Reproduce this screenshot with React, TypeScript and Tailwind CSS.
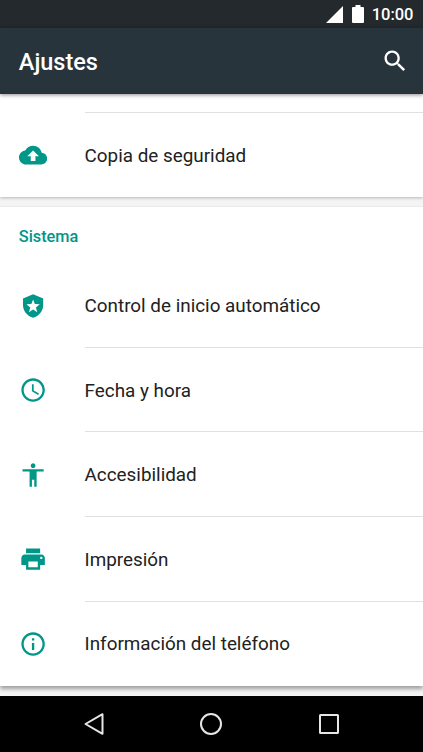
import type { ReactNode } from "react";

type SettingItem = {
  label: string;
  icon: ReactNode;
};

function Icon({ children }: { children: ReactNode }) {
  return (
    <svg viewBox="0 0 24 24" className="h-[28.2px] w-[28.2px] shrink-0 fill-current text-[#009688]">
      {children}
    </svg>
  );
}

const backup: SettingItem = {
  label: "Copia de seguridad",
  icon: (
    <path d="M19.35 10.04C18.67 6.59 15.64 4 12 4 9.11 4 6.6 5.64 5.35 8.04 2.34 8.36 0 10.91 0 14c0 3.31 2.69 6 6 6h13c2.76 0 5-2.24 5-5 0-2.64-2.05-4.78-4.65-4.96zM14 13v4h-4v-4H7l5-5 5 5h-3z" />
  ),
};

const systemItems: SettingItem[] = [
  {
    label: "Control de inicio automático",
    icon: (
      <>
        <path d="M12 2l8.6 3.6v5.5c0 5-3.6 9.5-8.6 10.9-5-1.4-8.6-5.9-8.6-10.9V5.6z" />
        <path
          className="fill-white"
          d="M12 6.4l1.5 3.9 4.2.2-3.3 2.6 1.15 4.05L12 14.85l-3.55 2.3 1.15-4.05-3.3-2.6 4.2-.2z"
        />
      </>
    ),
  },
  {
    label: "Fecha y hora",
    icon: (
      <path d="M11.99 2C6.47 2 2 6.48 2 12s4.47 10 9.99 10C17.52 22 22 17.52 22 12S17.52 2 11.99 2zM12 20c-4.42 0-8-3.58-8-8s3.58-8 8-8 8 3.58 8 8-3.58 8-8 8zm.5-13H11v6l5.25 3.15.75-1.23-4.5-2.67z" />
    ),
  },
  {
    label: "Accesibilidad",
    icon: (
      <path d="M12 2c1.1 0 2 .9 2 2s-.9 2-2 2-2-.9-2-2 .9-2 2-2zm9 7h-6v13h-2v-6h-2v6H9V9H3V7h18v2z" />
    ),
  },
  {
    label: "Impresión",
    icon: (
      <path d="M19 8H5c-1.66 0-3 1.34-3 3v6h4v4h12v-4h4v-6c0-1.66-1.34-3-3-3zm-3 11H8v-5h8v5zm3-7c-.55 0-1-.45-1-1s.45-1 1-1 1 .45 1 1-.45 1-1 1zm-1-9H6v4h12V3z" />
    ),
  },
  {
    label: "Información del teléfono",
    icon: (
      <path d="M11 17h2v-6h-2v6zm1-15C6.48 2 2 6.48 2 12s4.48 10 10 10 10-4.48 10-10S17.52 2 12 2zm0 18c-4.41 0-8-3.59-8-8s3.59-8 8-8 8 3.59 8 8-3.59 8-8 8zM11 9h2V7h-2v2z" />
    ),
  },
];

function SettingRow({ item, divider = false }: { item: SettingItem; divider?: boolean }) {
  return (
    <div className="flex h-[84.6px] items-center pl-[18.8px]">
      <Icon>{item.icon}</Icon>
      <div
        className={`ml-[37.6px] flex h-full flex-1 items-center border-b pt-[2px] text-[18.85px] text-[#212121] ${
          divider ? "border-[#e0e0e0]" : "border-transparent"
        }`}
      >
        {item.label}
      </div>
    </div>
  );
}

function StatusBar() {
  return (
    <div className="flex h-7 shrink-0 items-center justify-end bg-[#23292c] pr-[9.5px] text-white">
      <svg viewBox="0 0 17 17" className="mr-[9px] h-[17px] w-[17px] fill-current">
        <path d="M0 17L17 0v17z" />
      </svg>
      <svg viewBox="0 0 12 18" className="mr-[8px] h-[18px] w-[12px] fill-current">
        <path d="M3.5 0h5v2H11a1 1 0 0 1 1 1v14a1 1 0 0 1-1 1H1a1 1 0 0 1-1-1V3a1 1 0 0 1 1-1h2.5z" />
      </svg>
      <span className="pt-[3px] text-[16.5px] leading-none font-medium">10:00</span>
    </div>
  );
}

function AppBar() {
  return (
    <header className="relative z-10 flex h-[66px] shrink-0 items-center justify-between bg-[#28343b] pr-[14px] pl-[18.8px] text-white shadow-[0_1px_4px_rgba(0,0,0,0.45)]">
      <h1 className="pt-[4px] text-[23.5px] leading-none font-medium">Ajustes</h1>
      <svg viewBox="0 0 24 24" className="h-[28.2px] w-[28.2px] fill-current">
        <path d="M15.5 14h-.79l-.28-.27C15.41 12.59 16 11.11 16 9.5 16 5.91 13.09 3 9.5 3S3 5.91 3 9.5 5.91 16 9.5 16c1.61 0 3.09-.59 4.23-1.57l.27.28v.79l5 4.99L20.49 19l-4.99-5zm-6 0C7.01 14 5 11.99 5 9.5S7.01 5 9.5 5 14 7.01 14 9.5 11.99 14 9.5 14z" />
      </svg>
    </header>
  );
}

function NavBar() {
  return (
    <nav className="relative z-10 flex h-14 shrink-0 items-center justify-center gap-[93.5px] bg-black pr-px">
      <svg viewBox="0 0 24 24" className="h-6 w-6 fill-none stroke-[#e6e6e6] stroke-2">
        <path d="M20.5 2.2v19.6L3.5 12z" strokeLinejoin="round" />
      </svg>
      <svg viewBox="0 0 24 24" className="h-6 w-6 fill-none stroke-[#e6e6e6] stroke-2">
        <circle cx="12" cy="12" r="10" />
      </svg>
      <svg viewBox="0 0 24 24" className="h-6 w-6 fill-none stroke-[#e6e6e6] stroke-2">
        <rect x="3" y="3" width="18" height="18" rx="0.5" />
      </svg>
    </nav>
  );
}

export default function App() {
  return (
    <div className="flex h-[752px] w-[423px] flex-col overflow-hidden bg-[#f4f4f4] font-['Roboto',sans-serif]">
      <StatusBar />
      <AppBar />
      <main className="flex min-h-0 flex-1 flex-col">
        <section className="h-[103px] shrink-0 bg-white pt-[18px] shadow-[0_1px_3px_rgba(0,0,0,0.25)]">
          <div className="ml-[84.6px] h-px bg-[#e0e0e0]" />
          <SettingRow item={backup} />
        </section>

        <section className="mt-[9.5px] shrink-0 bg-white shadow-[0_-1px_0_#ececec,0_3px_4px_rgba(0,0,0,0.35)]">
          <h2 className="flex h-[56.8px] items-center pt-[4px] pl-[18.8px] text-[16.3px] font-medium text-[#009688]">
            Sistema
          </h2>
          {systemItems.map((item, i) => (
            <SettingRow key={item.label} item={item} divider={i < systemItems.length - 1} />
          ))}
        </section>
      </main>
      <NavBar />
    </div>
  );
}
